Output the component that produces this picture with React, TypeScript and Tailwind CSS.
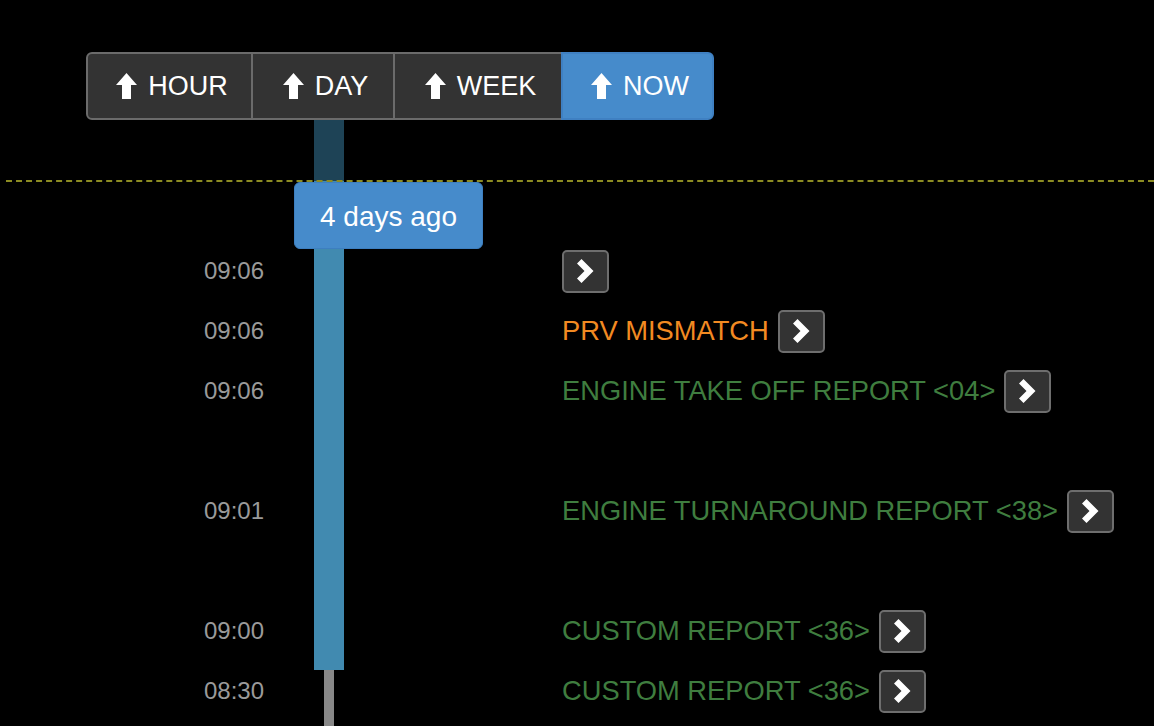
const font = { fontFamily: '"Liberation Sans", Arial, Helvetica, sans-serif' }

type Row = { time: string; label?: string; color?: string } | null

// null = an empty slot on the timeline
const rows: Row[] = [
  { time: '09:06' },
  { time: '09:06', label: 'PRV MISMATCH', color: 'text-[#f28a22]' },
  { time: '09:06', label: 'ENGINE TAKE OFF REPORT <04>', color: 'text-[#3f7d3f]' },
  null,
  { time: '09:01', label: 'ENGINE TURNAROUND REPORT <38>', color: 'text-[#3f7d3f]' },
  null,
  { time: '09:00', label: 'CUSTOM REPORT <36>', color: 'text-[#3f7d3f]' },
  { time: '08:30', label: 'CUSTOM REPORT <36>', color: 'text-[#3f7d3f]' },
]

function ArrowUp() {
  return (
    <svg width="21" height="26" viewBox="0 0 21 26" className="mb-[1px] shrink-0">
      <polygon points="10.5,0 21,12 15,12 15,26 6,26 6,12 0,12" fill="white" />
    </svg>
  )
}

function Chevron() {
  return (
    <svg width="17" height="24" viewBox="0 0 17 24">
      <polygon points="0,4.5 4.5,0 16.5,12 4.5,24 0,19.5 7.5,12" fill="white" />
    </svg>
  )
}

function GoButton() {
  return (
    <button className="w-[47px] h-[43px] shrink-0 flex items-center justify-center bg-[#333] border-2 border-[#6e6e6e] rounded-[5px]">
      <Chevron />
    </button>
  )
}

const ranges = [
  { label: 'HOUR', cls: 'w-[167px] border-2 border-[#6b6b6b] rounded-l-[6px] bg-[#333]' },
  { label: 'DAY', cls: 'w-[142px] border-y-2 border-r-2 border-[#6b6b6b] bg-[#333]' },
  { label: 'WEEK', cls: 'w-[166px] border-y-2 border-[#6b6b6b] bg-[#333]' },
  { label: 'NOW', cls: 'w-[153px] border-2 border-[#3f80c2] rounded-r-[6px] bg-[#468bcb]' },
]

export default function App() {
  return (
    <div className="relative w-full h-[726px] bg-black overflow-hidden" style={font}>
      {/* Кнопки диапазона */}
      <div className="pt-[52px] pl-[86px]">
        <div className="flex h-[68px]">
          {ranges.map(r => (
            <button
              key={r.label}
              className={`${r.cls} h-full flex items-end justify-center gap-[11px] pl-[5px] pb-[18px] text-white text-[27px] leading-none`}
            >
              <ArrowUp />
              <span>{r.label}</span>
            </button>
          ))}
        </div>
      </div>

      {/* Таймлайн */}
      <div className="flex h-[606px]">
        <div className="w-[264px] pt-[121px] flex flex-col">
          {rows.map((row, i) => (
            <div key={i} className="h-[60px] flex items-center justify-end text-[24px] text-[#9a9a9a] leading-none">
              {row?.time}
            </div>
          ))}
        </div>

        <div className="ml-[50px] w-[30px] flex flex-col">
          <div className="h-[61px] bg-[#1e4356]" />
          <div className="h-[489px] bg-[#418ab0]" />
          <div className="mx-auto w-[10px] flex-1 bg-[#888]" />
        </div>

        <div className="ml-[218px] pt-[121px] flex flex-col">
          {rows.map((row, i) => (
            <div key={i} className="h-[60px] flex items-center gap-[9px]">
              {row?.label && (
                <span className={`${row.color} text-[27.3px] leading-none whitespace-nowrap`}>{row.label}</span>
              )}
              {row && <GoButton />}
            </div>
          ))}
        </div>
      </div>

      {/* Линия «сейчас» */}
      <div className="absolute left-[6px] right-0 top-[180px] border-t-2 border-dashed border-[#8c8c22]" />

      {/* Подсказка над шкалой */}
      <div className="absolute left-[294px] top-[182px] w-[189px] h-[67px] rounded-[6px] bg-[#468bcb] border border-[#3d7fc0] flex items-center justify-center text-white text-[28px] leading-none pt-[3px]">
        4 days ago
      </div>
    </div>
  )
}
